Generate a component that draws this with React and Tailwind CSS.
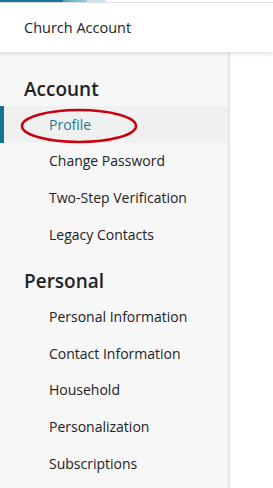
import React from "react";

const accountItems = ["Profile", "Change Password", "Two-Step Verification", "Legacy Contacts"];
const personalItems = ["Personal Information", "Contact Information", "Household", "Personalization", "Subscriptions"];

function Item({ label, active }) {
  return (
    <div className={"relative flex h-[36.6px] items-center pl-[49px] text-[14px] " + (active ? "bg-[#eff0f0] text-[#1b7a9b]" : "text-[#212225]")}>
      {active && <div className="absolute left-0 top-0 h-full w-[4px] bg-[#157396]" />}
      <span>{label}</span>
      {active && (
        <svg className="absolute left-[20px] top-[2px]" width="120" height="36" viewBox="0 0 120 36">
          <ellipse cx="59" cy="18" rx="57" ry="16" fill="none" stroke="#c8000f" strokeWidth="2.6" />
        </svg>
      )}
    </div>
  );
}

function Heading({ children }) {
  return (
    <div className="flex h-[46px] items-end pb-[3px] pl-[24px] text-[19px] font-semibold text-[#212225]">
      {children}
    </div>
  );
}

export default function App() {
  return (
    <div className="flex h-[488px] w-[273px] flex-col overflow-hidden bg-white" style={{ fontFamily: '"Open Sans", sans-serif' }}>
      <div className="relative h-[3px] w-full">
        <div className="absolute left-0 top-[2px] h-[1px] w-full bg-[#e3e3e3]" />
        <div className="absolute left-0 top-0 flex h-[2px]">
          <div className="w-[63px] bg-[#157396]" />
          <div className="w-[24px] bg-gradient-to-r from-[#5aa2bf] to-[#9ccbdb]" />
          <div className="w-[19px] bg-[#cfe6ee]" />
        </div>
      </div>
      <div className="relative z-10 flex h-[49px] items-center pl-[24px] text-[14.5px] text-[#212225] shadow-[0_2px_4px_rgba(0,0,0,0.12)]">
        Church Account
      </div>
      <div className="flex flex-1">
        <div className="w-[230px] border-r-2 border-[#e8e8e8] bg-[#f7f7f7] pt-[8px]">
          <Heading>Account</Heading>
          {accountItems.map((l, i) => (
            <Item key={l} label={l} active={i === 0} />
          ))}
          <Heading>Personal</Heading>
          {personalItems.map((l) => (
            <Item key={l} label={l} />
          ))}
        </div>
        <div className="flex-1 bg-white" />
      </div>
    </div>
  );
}
